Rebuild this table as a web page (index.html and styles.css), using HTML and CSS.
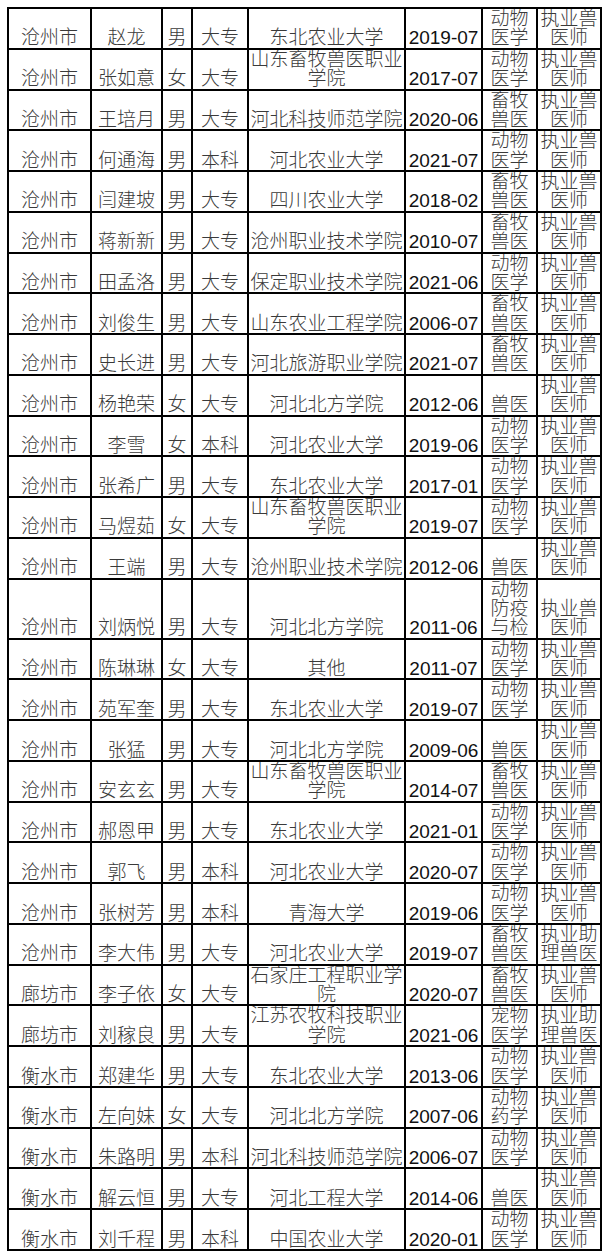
FILE: index.html
```html
<!DOCTYPE html>
<html lang="zh-CN">
<head>
<meta charset="utf-8">
<title>名单</title>
<link rel="stylesheet" href="styles.css">
</head>
<body>
<div class="page">
<table class="roster">
<colgroup>
<col class="c-city"><col class="c-name"><col class="c-sex"><col class="c-edu"><col class="c-school"><col class="c-date"><col class="c-major"><col class="c-cert">
</colgroup>
<tbody>
<tr><td>沧州市</td><td>赵龙</td><td>男</td><td>大专</td><td>东北农业大学</td><td class="num">2019-07</td><td>动物<br>医学</td><td>执业兽<br>医师</td></tr>
<tr><td>沧州市</td><td>张如意</td><td>女</td><td>大专</td><td>山东畜牧兽医职业<br>学院</td><td class="num">2017-07</td><td>动物<br>医学</td><td>执业兽<br>医师</td></tr>
<tr><td>沧州市</td><td>王培月</td><td>男</td><td>大专</td><td>河北科技师范学院</td><td class="num">2020-06</td><td>畜牧<br>兽医</td><td>执业兽<br>医师</td></tr>
<tr><td>沧州市</td><td>何通海</td><td>男</td><td>本科</td><td>河北农业大学</td><td class="num">2021-07</td><td>动物<br>医学</td><td>执业兽<br>医师</td></tr>
<tr><td>沧州市</td><td>闫建坡</td><td>男</td><td>大专</td><td>四川农业大学</td><td class="num">2018-02</td><td>畜牧<br>兽医</td><td>执业兽<br>医师</td></tr>
<tr><td>沧州市</td><td>蒋新新</td><td>男</td><td>大专</td><td>沧州职业技术学院</td><td class="num">2010-07</td><td>畜牧<br>兽医</td><td>执业兽<br>医师</td></tr>
<tr><td>沧州市</td><td>田孟洛</td><td>男</td><td>大专</td><td>保定职业技术学院</td><td class="num">2021-06</td><td>动物<br>医学</td><td>执业兽<br>医师</td></tr>
<tr><td>沧州市</td><td>刘俊生</td><td>男</td><td>大专</td><td>山东农业工程学院</td><td class="num">2006-07</td><td>畜牧<br>兽医</td><td>执业兽<br>医师</td></tr>
<tr><td>沧州市</td><td>史长进</td><td>男</td><td>大专</td><td>河北旅游职业学院</td><td class="num">2021-07</td><td>畜牧<br>兽医</td><td>执业兽<br>医师</td></tr>
<tr><td>沧州市</td><td>杨艳荣</td><td>女</td><td>大专</td><td>河北北方学院</td><td class="num">2012-06</td><td>兽医</td><td>执业兽<br>医师</td></tr>
<tr><td>沧州市</td><td>李雪</td><td>女</td><td>本科</td><td>河北农业大学</td><td class="num">2019-06</td><td>动物<br>医学</td><td>执业兽<br>医师</td></tr>
<tr><td>沧州市</td><td>张希广</td><td>男</td><td>大专</td><td>东北农业大学</td><td class="num">2017-01</td><td>动物<br>医学</td><td>执业兽<br>医师</td></tr>
<tr><td>沧州市</td><td>马煜茹</td><td>女</td><td>大专</td><td>山东畜牧兽医职业<br>学院</td><td class="num">2019-07</td><td>动物<br>医学</td><td>执业兽<br>医师</td></tr>
<tr><td>沧州市</td><td>王端</td><td>男</td><td>大专</td><td>沧州职业技术学院</td><td class="num">2012-06</td><td>兽医</td><td>执业兽<br>医师</td></tr>
<tr><td>沧州市</td><td>刘炳悦</td><td>男</td><td>大专</td><td>河北北方学院</td><td class="num">2011-06</td><td>动物<br>防疫<br>与检</td><td>执业兽<br>医师</td></tr>
<tr><td>沧州市</td><td>陈琳琳</td><td>女</td><td>大专</td><td>其他</td><td class="num">2011-07</td><td>动物<br>医学</td><td>执业兽<br>医师</td></tr>
<tr><td>沧州市</td><td>苑军奎</td><td>男</td><td>大专</td><td>东北农业大学</td><td class="num">2019-07</td><td>动物<br>医学</td><td>执业兽<br>医师</td></tr>
<tr><td>沧州市</td><td>张猛</td><td>男</td><td>大专</td><td>河北北方学院</td><td class="num">2009-06</td><td>兽医</td><td>执业兽<br>医师</td></tr>
<tr><td>沧州市</td><td>安玄玄</td><td>男</td><td>大专</td><td>山东畜牧兽医职业<br>学院</td><td class="num">2014-07</td><td>畜牧<br>兽医</td><td>执业兽<br>医师</td></tr>
<tr><td>沧州市</td><td>郝恩甲</td><td>男</td><td>大专</td><td>东北农业大学</td><td class="num">2021-01</td><td>动物<br>医学</td><td>执业兽<br>医师</td></tr>
<tr><td>沧州市</td><td>郭飞</td><td>男</td><td>本科</td><td>河北农业大学</td><td class="num">2020-07</td><td>动物<br>医学</td><td>执业兽<br>医师</td></tr>
<tr><td>沧州市</td><td>张树芳</td><td>男</td><td>本科</td><td>青海大学</td><td class="num">2019-06</td><td>动物<br>医学</td><td>执业兽<br>医师</td></tr>
<tr><td>沧州市</td><td>李大伟</td><td>男</td><td>大专</td><td>河北农业大学</td><td class="num">2019-07</td><td>畜牧<br>兽医</td><td>执业助<br>理兽医</td></tr>
<tr><td>廊坊市</td><td>李子依</td><td>女</td><td>大专</td><td>石家庄工程职业学<br>院</td><td class="num">2020-07</td><td>畜牧<br>兽医</td><td>执业兽<br>医师</td></tr>
<tr><td>廊坊市</td><td>刘稼良</td><td>男</td><td>大专</td><td>江苏农牧科技职业<br>学院</td><td class="num">2021-06</td><td>宠物<br>医学</td><td>执业助<br>理兽医</td></tr>
<tr><td>衡水市</td><td>郑建华</td><td>男</td><td>大专</td><td>东北农业大学</td><td class="num">2013-06</td><td>动物<br>医学</td><td>执业兽<br>医师</td></tr>
<tr><td>衡水市</td><td>左向妹</td><td>女</td><td>大专</td><td>河北北方学院</td><td class="num">2007-06</td><td>动物<br>药学</td><td>执业兽<br>医师</td></tr>
<tr><td>衡水市</td><td>朱路明</td><td>男</td><td>本科</td><td>河北科技师范学院</td><td class="num">2006-07</td><td>动物<br>医学</td><td>执业兽<br>医师</td></tr>
<tr><td>衡水市</td><td>解云恒</td><td>男</td><td>大专</td><td>河北工程大学</td><td class="num">2014-06</td><td>兽医</td><td>执业兽<br>医师</td></tr>
<tr><td>衡水市</td><td>刘千程</td><td>男</td><td>本科</td><td>中国农业大学</td><td class="num">2020-01</td><td>动物<br>医学</td><td>执业兽<br>医师</td></tr>
</tbody>
</table>
</div>
</body>
</html>
```
FILE: styles.css
```css
html, body {
  margin: 0;
  padding: 0;
  background: #ffffff;
}

.page {
  padding: 7px 0 0 7px;
}

.roster {
  border-collapse: collapse;
  table-layout: fixed;
  width: 593px;
  font-family: "Liberation Sans", "Noto Sans CJK SC", sans-serif;
  font-size: 19px;
  font-weight: 300;
  line-height: 19.38px;
  color: #3a3a3a;
}

.roster td {
  border: 2px solid #000000;
  padding: 0;
  text-align: center;
  vertical-align: bottom;
  white-space: nowrap;
  overflow: hidden;
}

.roster td.num {
  color: #111111;
  font-weight: 400;
}

.c-city { width: 83px; }
.c-name { width: 71px; }
.c-sex { width: 30px; }
.c-edu { width: 56px; }
.c-school { width: 157px; }
.c-date { width: 77px; }
.c-major { width: 55px; }
.c-cert { width: 64px; }
```
